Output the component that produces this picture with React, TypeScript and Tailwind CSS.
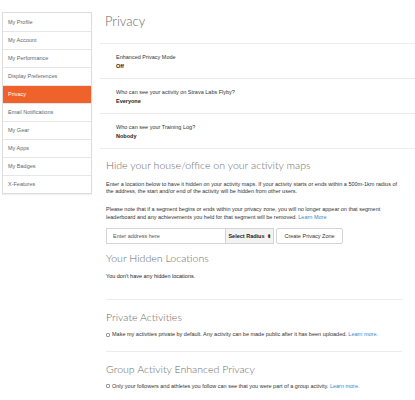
import type { ReactNode } from "react";

// ─── Data ─────────────────────────────────────────────────────────────────────
const navItems = [
  "My Profile",
  "My Account",
  "My Performance",
  "Display Preferences",
  "Privacy",
  "Email Notifications",
  "My Gear",
  "My Apps",
  "My Badges",
  "X-Features",
];

const settings = [
  { label: "Enhanced Privacy Mode", value: "Off" },
  { label: "Who can see your activity on Strava Labs Flyby?", value: "Everyone" },
  { label: "Who can see your Training Log?", value: "Nobody" },
];

const lightFont = { fontFamily: "Lato, Roboto, 'Liberation Sans', sans-serif" };

// ─── Bits ─────────────────────────────────────────────────────────────────────
function Heading({ children, className = "" }: { children: ReactNode; className?: string }) {
  return (
    <h2 className={`text-[10.6px] leading-[12px] font-light text-[#6b6b6b] ${className}`} style={lightFont}>
      {children}
    </h2>
  );
}

function LearnLink({ children }: { children: ReactNode }) {
  return <a className="text-[#3d87c4]">{children}</a>;
}

function CheckRow({ children }: { children: ReactNode }) {
  return (
    <label className="mt-[8px] flex items-center gap-[2px] text-[5.5px] leading-[7.5px] text-[#333]">
      <span className="inline-block w-[4px] h-[4px] border border-[#999] rounded-[1px] bg-white" />
      <span>{children}</span>
    </label>
  );
}

// ─── Component ────────────────────────────────────────────────────────────────
export default function App() {
  return (
    <div
      className="w-[415px] h-[400px] bg-white flex overflow-hidden"
      style={{ fontFamily: "'Liberation Sans', Arial, sans-serif" }}
    >
      {/* ── Sidebar ── */}
      <aside className="ml-[2px] mt-[12px] w-[90px] self-start border border-[#ddd] shadow-[0_1px_1px_rgba(0,0,0,0.06)] bg-white">
        {navItems.map((item, i) => {
          const active = item === "Privacy";
          return (
            <div
              key={item}
              className={`h-[18px] flex items-center pl-[5px] text-[5.5px] ${
                i > 0 ? "border-t border-[#e6e6e6]" : ""
              } ${active ? "bg-[#f0622b] text-white font-medium" : "text-[#666]"}`}
            >
              {item}
            </div>
          );
        })}
      </aside>

      {/* ── Main ── */}
      <main className="ml-[8px] flex-1 min-w-0">
        <div className="h-[43px] pt-[14px] pl-[5px]">
          <h1 className="text-[13px] leading-[14px] font-light text-[#6b6b6b]" style={lightFont}>
            Privacy
          </h1>
        </div>

        {/* settings list */}
        <div className="border-t border-[#ececec]">
          {settings.map((s) => (
            <div
              key={s.label}
              className="h-[35px] border-b border-[#ececec] pl-[16px] pt-[9px] text-[5.5px] leading-[9px] text-[#333]"
            >
              <div>{s.label}</div>
              <div className="font-bold text-[#222]">{s.value}</div>
            </div>
          ))}
        </div>

        <div className="pl-[6px] pr-[13px]">
          {/* hidden zones */}
          <Heading className="mt-[10px]">Hide your house/office on your activity maps</Heading>
          <p className="mt-[10px] text-[5.5px] leading-[7px] text-[#333]">
            Enter a location below to have it hidden on your activity maps. If your activity starts or
            ends within a 500m-1km radius of the address, the start and/or end of the activity will be
            hidden from other users.
          </p>
          <p className="mt-[10px] text-[5.5px] leading-[8px] text-[#333]">
            Please note that if a segment begins or ends within your privacy zone, you will no longer
            appear on that segment leaderboard and any achievements you held for that segment will be
            removed. <LearnLink>Learn More</LearnLink>
          </p>

          <div className="mt-[7px] flex items-center h-[16px] text-[5.5px]">
            <div className="w-[120px] h-full border border-[#d4d4d4] bg-white flex items-center pl-[6px] text-[#555]">
              Enter address here
            </div>
            <div className="w-[48px] h-full border border-[#d4d4d4] border-l-0 bg-[#f3f3f3] flex items-center justify-center gap-[2px] font-semibold text-[#222]">
              Select Radius <span className="text-[5px] leading-none">⬍</span>
            </div>
            <div className="ml-[2px] w-[67px] h-full border border-[#d4d4d4] rounded-[2px] bg-white flex items-center justify-center text-[#333]">
              Create Privacy Zone
            </div>
          </div>

          <Heading className="mt-[8px]">Your Hidden Locations</Heading>
          <p className="mt-[9px] text-[5.5px] leading-[7px] text-[#222]">
            You don't have any hidden locations.
          </p>

          {/* private activities */}
          <div className="mt-[19px] border-t border-[#ececec] pt-[11px]">
            <Heading>Private Activities</Heading>
            <CheckRow>
              Make my activities private by default. Any activity can be made public after it has been
              uploaded. <LearnLink>Learn more.</LearnLink>
            </CheckRow>
          </div>

          {/* group activity */}
          <div className="mt-[12px] border-t border-[#ececec] pt-[11px]">
            <Heading>Group Activity Enhanced Privacy</Heading>
            <CheckRow>
              Only your followers and athletes you follow can see that you were part of a group
              activity. <LearnLink>Learn more.</LearnLink>
            </CheckRow>
          </div>
        </div>
      </main>
    </div>
  );
}
